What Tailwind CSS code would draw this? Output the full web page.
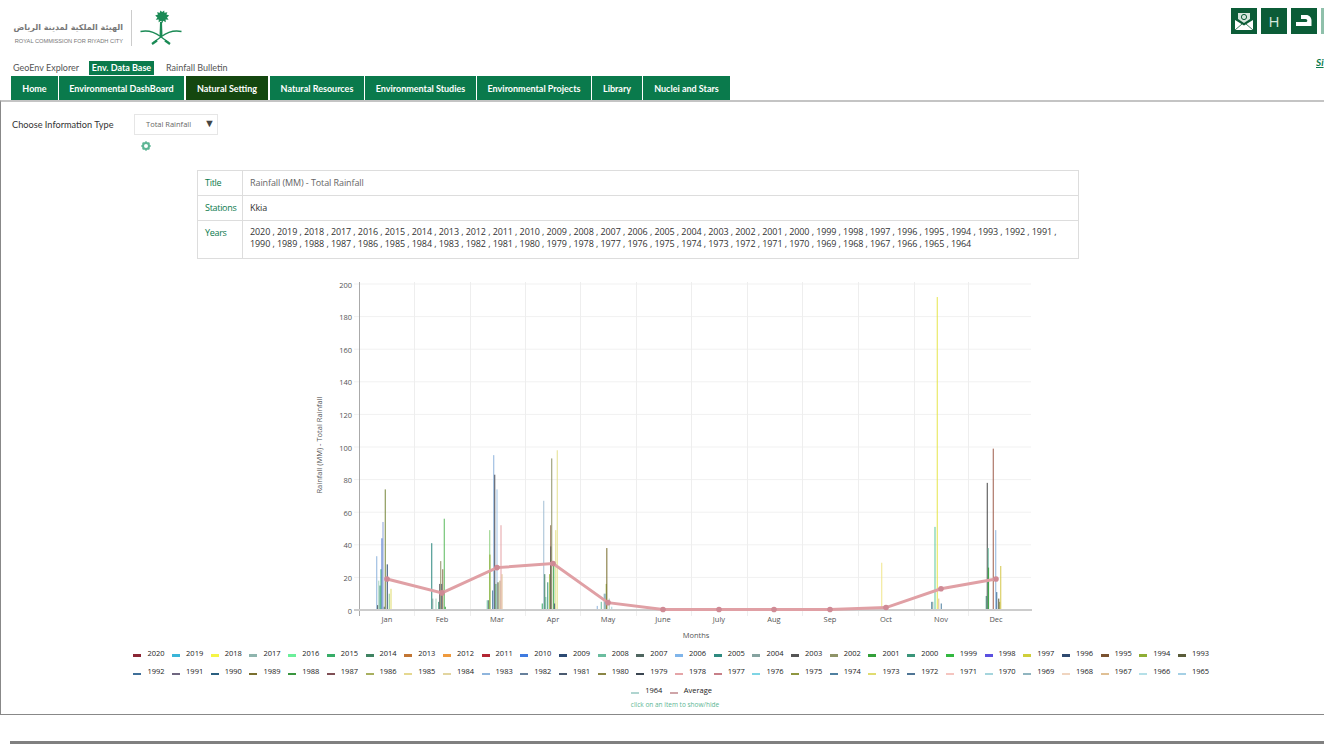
<!DOCTYPE html>
<html lang="en">
<head>
  <meta charset="UTF-8" />
  <title>Rainfall</title>
  <script src="https://cdn.jsdelivr.net/npm/@tailwindcss/browser@4"></script>
</head>
<body class="bg-white font-['Open_Sans',sans-serif] text-[#333] overflow-hidden">
<div class="w-[1324px] h-[744px] overflow-hidden">

  <!-- Header -->
  <header class="h-[59px] flex">
    <div class="flex pl-[15px] pt-[10px]">
      <div class="w-[108px] h-[36px] flex flex-col items-end justify-end">
        <div dir="rtl" class="font-['DejaVu_Sans',sans-serif] font-bold text-[8px] leading-[12px] text-[#777] whitespace-nowrap">الهيئة الملكية لمدينة الرياض</div>
        <div class="text-[5.7px] leading-[10px] mt-[2px] text-[#777] whitespace-nowrap font-['Liberation_Sans',sans-serif]">ROYAL COMMISSION FOR RIYADH CITY</div>
      </div>
      <div class="w-px h-[36px] bg-[#ccc] ml-[8px] mr-[8px]"></div>
      <svg width="44" height="37" viewBox="0 0 44 37" fill="none" class="-mt-px">
        <g fill="#1a8a55">
          <path d="M21 1l1.2 2 2-1.6.2 2.4 3-.6-1 2.4 2.8.8-2.2 2 1.6 2.4-3-.2.2 2.6-2.6-1.4-1 2.4-1-2.4-2.6 1.4.2-2.6-3 .2 1.6-2.4-2.2-2 2.8-.8-1-2.4 3 .6.2-2.4 2 1.6z"/>
          <path d="M20 13h2l.5 14h-3z"/>
        </g>
        <g stroke="#1a8a55" fill="none">
          <path d="M0.5 22.5c7-1.5 14 .5 20 5l8 6" stroke-width="1.3"/>
          <path d="M41.5 22.5c-7-1.5-14 .5-20 5l-8 6" stroke-width="1.3"/>
          <path d="M12 35l5-3.500M30 35l-5-3.500" stroke-width="2.200"/>
        </g>
      </svg>
    </div>
    <div class="ml-auto w-[93px] shrink-0 pt-[8px] flex gap-1">
      <div class="w-[26px] h-[26px] shrink-0 bg-[#0b5c37] flex items-center justify-center">
        <svg width="20" height="20" viewBox="0 0 20 20">
          <path d="M4 8V2h12v6l-6 4z" fill="#d5e5dc"/>
          <circle cx="10" cy="6" r="2.600" fill="none" stroke="#0b5c37" stroke-width="1"/>
          <path d="M1 9l9 5.500L19 9v10H1z" fill="#fff"/>
          <path d="M1 19l7-6M19 19l-7-6" stroke="#0b5c37" stroke-width="0.8"/>
        </svg>
      </div>
      <div class="w-[26px] h-[26px] shrink-0 bg-[#0b5c37] flex items-center justify-center text-[#d8e8df] text-[15px] leading-none">H</div>
      <div class="w-[26px] h-[26px] shrink-0 bg-[#0b5c37]">
        <svg width="26" height="26" viewBox="0 0 26 26" fill="#fff">
          <path d="M5 14h9.500c1.200 0 1.800-.5 1.800-1.300S15.700 11 14.500 11H10V7h5c3.500 0 5.500 2.500 5.500 5.500V18H5z"/>
        </svg>
      </div>
      <div class="w-[26px] h-[26px] shrink-0 bg-[#8fc0ab]"></div>
    </div>
  </header>

  <!-- Top links -->
  <nav class="h-[17px] pl-[13px] flex items-center text-[9px] text-[#555] font-['Lato',sans-serif]">
    <span class="w-[76px] whitespace-nowrap">GeoEnv Explorer</span>
    <span class="w-[65px] h-[14px] bg-[#0a7a4c] text-white font-bold flex items-center justify-center whitespace-nowrap">Env. Data Base</span>
    <span class="ml-[12px] whitespace-nowrap">Rainfall Bulletin</span>
    <a class="ml-auto w-[8px] overflow-hidden italic font-bold text-[#0a7a4c] underline -mt-[10px] text-[10px]">Si</a>
  </nav>

  <!-- Tabs -->
  <div class="h-[24px] pl-[11px] flex gap-px text-white text-[9px] font-bold font-['Lato',sans-serif]">
    <a class="w-[47px] pt-px bg-[#0a7a4c] flex items-center justify-center whitespace-nowrap">Home</a>
    <a class="w-[125px] pt-px bg-[#0a7a4c] flex items-center justify-center whitespace-nowrap">Environmental DashBoard</a>
    <a class="w-[82px] pt-px ml-px bg-[#14470f] flex items-center justify-center whitespace-nowrap">Natural Setting</a>
    <a class="w-[94px] pt-px ml-px bg-[#0a7a4c] flex items-center justify-center whitespace-nowrap">Natural Resources</a>
    <a class="w-[111px] pt-px bg-[#0a7a4c] flex items-center justify-center whitespace-nowrap">Environmental Studies</a>
    <a class="w-[114px] pt-px bg-[#0a7a4c] flex items-center justify-center whitespace-nowrap">Environmental Projects</a>
    <a class="w-[50px] pt-px bg-[#0a7a4c] flex items-center justify-center whitespace-nowrap">Library</a>
    <a class="w-[87px] pt-px bg-[#0a7a4c] flex items-center justify-center whitespace-nowrap">Nuclei and Stars</a>
  </div>

  <!-- Main panel -->
  <main class="h-[615px] border-l border-b border-[#888] border-t-2 border-t-[#c4c4c4]">
    <div class="h-[37px] pt-[12px] pl-[11px] flex">
      <label class="w-[122px] pt-[4px] text-[9.2px] font-['Lato',sans-serif] whitespace-nowrap">Choose Information Type</label>
      <div class="w-[84px] h-[21px] border border-[#e6e6e6] flex items-center pl-[11px] text-[7.5px] text-[#666] whitespace-nowrap">
        <span class="w-[58px]">Total Rainfall</span><span class="text-[11px] text-[#444] -mt-[3px]">▼</span>
      </div>
    </div>
    <div class="h-[31px] pl-[140px] pt-px">
      <svg width="10" height="10" viewBox="0 0 10 10" class="mt-px">
        <circle cx="5" cy="5" r="3" fill="none" stroke="#5cb594" stroke-width="2"/>
        <path d="M5 .2v9.600M.2 5h9.600M1.600 1.600l6.800 6.800M8.400 1.600l-6.800 6.800" stroke="#5cb594" stroke-width="1.500" stroke-dasharray="1.800 6 1.800"/>
      </svg>
    </div>

    <!-- Info table -->
    <div class="ml-[196px] w-[882px] border border-[#ddd] text-[9px] tracking-[-0.09px] text-[#333]">
      <div class="h-[25px] flex border-b border-[#ddd]">
        <div class="w-[45px] pl-[7px] pt-[5px] border-r border-[#ddd] text-[#0a7a4c] tracking-[-0.3px]">Title</div>
        <div class="pl-[7px] pt-[5px] text-[#666]">Rainfall (MM) - Total Rainfall</div>
      </div>
      <div class="h-[25px] flex border-b border-[#ddd]">
        <div class="w-[45px] pl-[7px] pt-[5px] border-r border-[#ddd] text-[#0a7a4c] tracking-[-0.3px]">Stations</div>
        <div class="pl-[7px] pt-[5px]">Kkia</div>
      </div>
      <div class="h-[37px] flex">
        <div class="w-[45px] pl-[7px] pt-[5px] border-r border-[#ddd] text-[#0a7a4c] tracking-[-0.3px]">Years</div>
        <div class="pl-[7px] pt-[5px] leading-[12px] whitespace-nowrap">2020 , 2019 , 2018 , 2017 , 2016 , 2015 , 2014 , 2013 , 2012 , 2011 , 2010 , 2009 , 2008 , 2007 , 2006 , 2005 , 2004 , 2003 , 2002 , 2001 , 2000 , 1999 , 1998 , 1997 , 1996 , 1995 , 1994 , 1993 , 1992 , 1991 ,<br>1990 , 1989 , 1988 , 1987 , 1986 , 1985 , 1984 , 1983 , 1982 , 1981 , 1980 , 1979 , 1978 , 1977 , 1976 , 1975 , 1974 , 1973 , 1972 , 1971 , 1970 , 1969 , 1968 , 1967 , 1966 , 1965 , 1964</div>
      </div>
    </div>

    <!-- Chart: viewBox uses page coordinates -->
    <svg id="chart" class="block ml-[299px] mt-[16px]" width="740" height="368" viewBox="300 276 740 368" font-family="Open Sans, sans-serif" font-size="7.5" fill="#555"></svg>

    <!-- Legend -->
    <div id="legend" class="ml-[132px] w-[1084px] flex flex-wrap justify-center mt-px"></div>
    <div class="ml-[132px] w-[1084px] text-center text-[6.5px] leading-[9px] text-[#5cb594]">click on an item to show/hide</div>
  </main>

  <div class="h-[3px] mt-[26px] ml-[10px] bg-[#808080]"></div>
</div>

<script>
  const legend = [
    ["2020","#8b2635"],["2019","#3ab5d8"],["2018","#f5f545"],["2017","#8fb5ae"],["2016","#6bef9a"],["2015","#37ad68"],["2014","#3f8362"],
    ["2013","#c27633"],["2012","#ef9a3d"],["2011","#b32633"],["2010","#3f7be0"],["2009","#2c4a73"],["2008","#6bbd9f"],["2007","#4f6660"],
    ["2006","#80b5ea"],["2005","#2f8a80"],["2004","#86a3a0"],["2003","#555555"],["2002","#8f9468"],["2001","#33a03a"],["2000","#3a957a"],
    ["1999","#33b840"],["1998","#5b50e0"],["1997","#cfcf3a"],["1996","#2f4a70"],["1995","#7a5230"],["1994","#8fae35"],["1993","#5a5c3a"],
    ["1992","#3f6f99"],["1991","#6f6680"],["1990","#2a5f80"],["1989","#7a6f2f"],["1988","#3a963f"],["1987","#7f4f55"],["1986","#a8b060"],
    ["1985","#e5d890"],["1984","#e2d5a0"],["1983","#8fb5dd"],["1982","#66809c"],["1981","#4a5a70"],["1980","#8a8545"],["1979","#3a4550"],
    ["1978","#e5a5a8"],["1977","#c77f88"],["1976","#7fd5e5"],["1975","#8f9640"],["1974","#4f80a0"],["1973","#e0dc70"],["1972","#4f7595"],
    ["1971","#f5c5c0"],["1970","#a5d5dd"],["1969","#90b5c0"],["1968","#f0d5c0"],["1967","#e0c095"],["1966","#b5e0e8"],["1965","#a5d0e5"],
    ["1964","#b0d5d0"],["Average","#cfa5a8"]
  ];
  const box = document.getElementById("legend");
  legend.forEach(([name, color], i) => {
    const item = document.createElement("div");
    item.className = name === "Average"
      ? "w-[49px] h-[18.5px] flex items-center text-[7.5px] text-[#222]"
      : "w-[38.7px] h-[18.5px] flex items-center text-[7.5px] text-[#222]";
    const swatch = document.createElement("span");
    swatch.className = i < 28 ? "w-[8px] h-[3px] mt-[4px] mr-[6px] shrink-0" : "w-[8px] h-[2px] mt-[5px] mr-[6px] shrink-0";
    swatch.style.background = color;
    item.appendChild(swatch);
    item.appendChild(document.createTextNode(name));
    box.appendChild(item);
  });

  // [x, value, colour]
  const bars = [
    [376.7,33,"#8fb5dd"],[377.7,3,"#3a4550"],[378.7,18,"#a8d5c0"],[380,15,"#3a957a"],[381,25,"#37ad68"],[382,44,"#3f6fc9"],[383,54,"#8fa5dd"],[384.300,2,"#4f6660"],[385.300,74,"#7a8a3f"],[387.300,28,"#2c4a73"],[389.300,10,"#8fd080"],[391,13,"#e0dc70"],
    [431.700,41,"#2f8a80"],[432.700,7,"#86a3a0"],[436,7,"#a8d5c0"],[438.700,5,"#3a957a"],[439.700,16,"#555555"],[440.700,30,"#8f9468"],[441.700,16,"#4a5a70"],[442.700,25,"#8f7055"],[444.300,56,"#5dbb60"],[445.300,2,"#33a03a"],
    [487.300,6,"#6bbd9f"],[488.700,6,"#4f6660"],[489.700,49,"#8fd080"],[489.900,34,"#8fae35"],[492.700,12,"#3f6f99"],[493.700,95,"#8fb5dd"],[494.700,83,"#4a4f5a"],[496,16,"#3a963f"],[497,74,"#a5c5e5"],[498,17,"#5a5c3a"],[500,18,"#a8b060"],[501,52,"#e5a5a8"],[502,22,"#e0c095"],
    [542.300,4,"#37ad68"],[543.700,67,"#a5c0d5"],[544.700,22,"#3f8362"],[545.700,8,"#6bbd9f"],[547.700,17,"#3a957a"],[549.700,22,"#8fae35"],[550.700,52,"#8f7055"],[550.900,39,"#555555"],[551.700,93,"#8f9468"],[553.700,28,"#33a03a"],[554.700,4,"#2f4a70"],[555.700,49,"#e5e090"],[557.300,98,"#e5e090"],
    [597.300,2.500,"#8fb5dd"],[601.300,5,"#6bbd9f"],[604.300,10,"#86a3a0"],[605.300,10,"#80b5ea"],[606.300,16,"#8fae35"],[606.800,38,"#7a6f2f"],[609.300,7,"#a8d5c0"],[611.700,2,"#a5d5dd"],
    [881.700,29,"#f0e68c"],
    [931.700,5,"#4f80a0"],[932.700,5,"#86a3a0"],[935,51,"#5fc9a0"],[937.300,192,"#e6e650"],[938.700,7,"#e0c095"],[941.300,4,"#4f80a0"],
    [986.300,8.600,"#3a957a"],[987.300,78,"#4a4a4a"],[988.300,38,"#6bbd9f"],[988.500,26,"#33a03a"],[993.300,99,"#a0604f"],[995.700,49,"#8fb5dd"],[996.700,11,"#3f6f99"],[998.700,7,"#5a5c3a"],[999.700,5,"#8f9640"],[1000.700,27,"#d5c84f"]
  ];
  const months = ["Jan","Feb","Mar","Apr","May","June","July","Aug","Sep","Oct","Nov","Dec"];
  const cx = [387,442,497,553,608,663,719,774,830,886,941,996];
  const avg = [19,10.500,26,28.500,4.500,.3,.3,.3,.3,1.500,13,19];
  const gridX = [414,470,525,580,636,691,747,802,858,914,968];
  const y = v => 611 - v * 1.63;

  let s = "";
  for (let v = 20; v <= 200; v += 20) s += `<line x1="354" x2="1031" y1="${y(v)}" y2="${y(v)}" stroke="#f1f1f1"/>`;
  gridX.forEach(x => s += `<line x1="${x+.5}" x2="${x+.5}" y1="283" y2="617" stroke="#eeeeee"/>`);
  s += `<line x1="359.500" x2="359.500" y1="283" y2="617" stroke="#aaa"/>`;
  bars.forEach(([x, v, c]) => s += `<rect x="${x-.6}" y="${y(v)}" width="1.200" height="${v*1.63}" fill="${c}" fill-opacity=".85"/>`);
  s += `<line x1="354" x2="1032" y1="611" y2="611" stroke="#ccc" stroke-width="2"/>`;
  s += `<polyline points="${cx.map((x,i)=>x+","+y(avg[i])).join(" ")}" fill="none" stroke="#e0a0a5" stroke-width="3"/>`;
  cx.forEach((x,i) => s += `<circle cx="${x}" cy="${y(avg[i])}" r="2.800" fill="#cf8a95"/>`);
  for (let v = 0; v <= 200; v += 20) s += `<text x="352" y="${y(v)+3.5}" text-anchor="end">${v}</text>`;
  months.forEach((m,i) => s += `<text x="${cx[i]}" y="623" text-anchor="middle">${m}</text>`);
  s += `<text x="696" y="639" text-anchor="middle">Months</text>`;
  s += `<text transform="translate(322,446) rotate(-90)" text-anchor="middle">Rainfall (MM) - Total Rainfall</text>`;
  document.getElementById("chart").innerHTML = s;
</script>
</body>
</html>
